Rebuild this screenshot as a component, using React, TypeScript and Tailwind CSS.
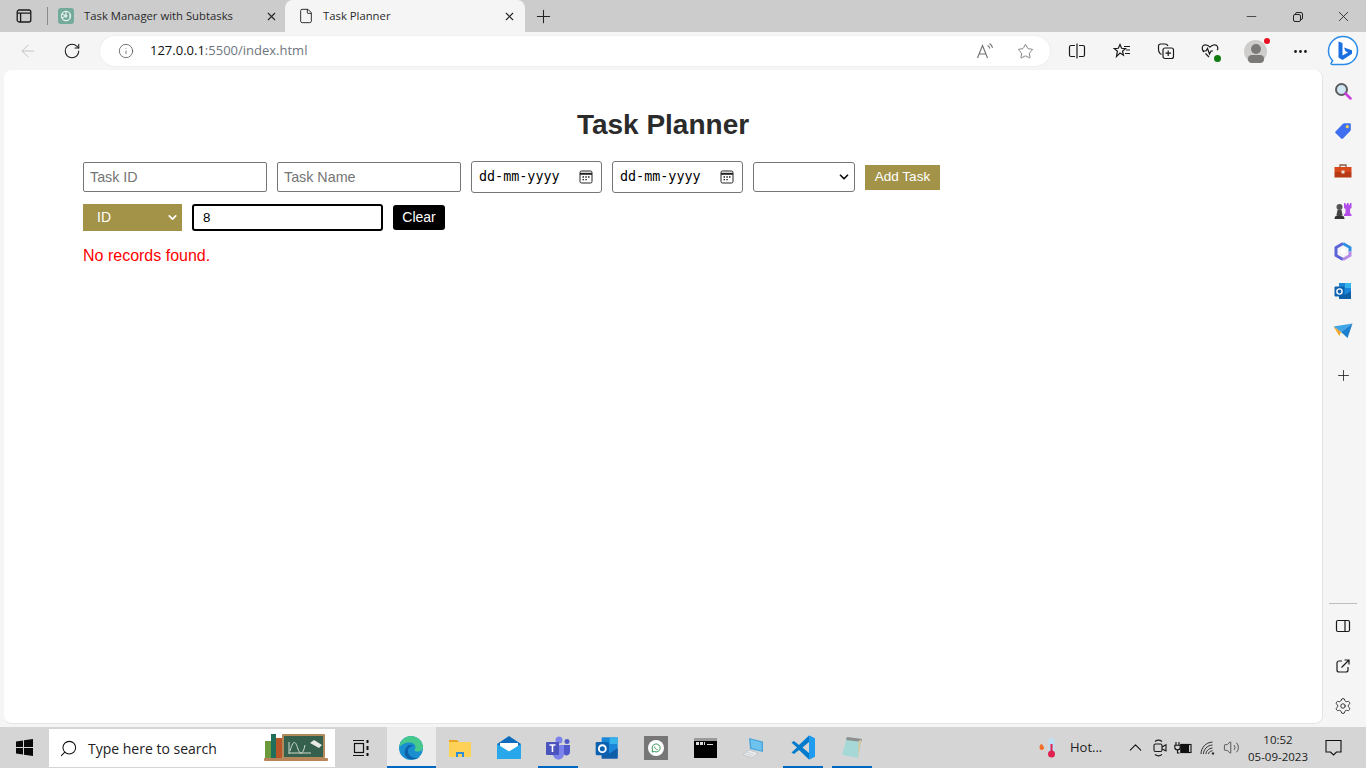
import React from "react";
import {
  ArrowLeft,
  ChevronDown,
  ChevronUp,
  File,
  Info,
  Minus,
  MoreHorizontal,
  Plus,
  RotateCw,
  Search,
  Settings,
  Star,
  Volume2,
  X,
} from "lucide-react";

const TabsIcon = () => (
  <svg width="16" height="16" viewBox="0 0 16 16" fill="none" stroke="#1a1a1a" strokeWidth="1.3">
    <rect x="1.2" y="2" width="13.6" height="12" rx="2" />
    <path d="M1.2 5.2h13.6M4.6 5.2V14" />
  </svg>
);

const GptIcon = () => (
  <div className="w-4 h-4 rounded-[3px] bg-[#74aa9c] flex items-center justify-center">
    <svg width="12" height="12" viewBox="0 0 12 12" fill="none" stroke="#e6f2ee" strokeWidth="1.1">
      <circle cx="6" cy="6" r="4.6" />
      <path d="M6 1.4v6M2 3.7l5.2 3M2 8.3l5.2-3M10 3.7v4.6" />
    </svg>
  </div>
);

const ReadAloud = () => (
  <svg width="18" height="18" viewBox="0 0 18 18" fill="none" stroke="#6f6f6f" strokeWidth="1.1">
    <path d="M1.5 16L6.5 3.5 11.5 16M3.2 12h6.6" />
    <path d="M11.5 3.5c1.3.6 2 1.6 2.2 3M13.5 1.5c1.7 1 2.7 2.4 3 4.4" />
  </svg>
);

const SplitIcon = () => (
  <svg width="18" height="18" viewBox="0 0 18 18" fill="none" stroke="#1a1a1a" strokeWidth="1.2">
    <path d="M7 3.5H3a1.5 1.5 0 0 0-1.5 1.5v8A1.5 1.5 0 0 0 3 14.500h4M11 3.500h4A1.500 1.500 0 0 1 16.500 5v8a1.500 1.500 0 0 1-1.500 1.500h-4M9 1.500v15" />
  </svg>
);

const FavsIcon = () => (
  <svg width="18" height="18" viewBox="0 0 18 18" fill="none" stroke="#1a1a1a" strokeWidth="1.2">
    <path d="M7 2.500l1.600 3.800 3.900.3-3 2.600 1 4-3.500-2.100-3.500 3.500.9-5.400-3-2.600 3.900-.3z" />
    <path d="M11 4.500h6M13 8h4M12 11.500h5" />
  </svg>
);

const CollectionsIcon = () => (
  <svg width="18" height="18" viewBox="0 0 18 18" fill="none" stroke="#1a1a1a" strokeWidth="1.2">
    <path d="M4.500 12.500C2.500 11.500 1.500 9.500 1.500 7V4a2 2 0 0 1 2-2H8c1.500 0 2.500.8 3 2" />
    <rect x="6" y="6" width="10.500" height="10.500" rx="2" />
    <path d="M11.200 8.500v5.500M8.500 11.200H14" />
  </svg>
);

const HeartIcon = () => (
  <div className="relative w-[18px] h-[18px]">
    <svg width="18" height="18" viewBox="0 0 18 18" fill="none" stroke="#1a1a1a" strokeWidth="1.2">
      <path d="M3 10C1.500 8.500 1 7.500 1.200 5.800 1.500 3.500 3.500 2.500 5.500 3c1.500.4 2.500 1.200 3.500 2.200C10 4.200 11 3.400 12.500 3c2-.5 4 .5 4.300 2.800.1 1-.1 1.700-.5 2.500" />
      <path d="M1.500 9h3.500L6.500 6.500 8.500 12l1.500-3H12M4.500 11.500L8 15" />
    </svg>
    <div className="absolute right-[-2px] bottom-[-2px] w-[7px] h-[7px] rounded-full bg-[#107c10]" />
  </div>
);

const Avatar = () => (
  <div className="relative w-[23px] h-[23px] rounded-full bg-[#cfcdcb]">
    <div className="absolute left-[7px] top-[4px] w-[10px] h-[10px] rounded-full bg-[#7b7977]" />
    <div className="absolute left-[4px] top-[15px] w-[16px] h-[8px] rounded-full bg-[#7b7977]" />
    <div className="absolute right-[-3px] top-[-2px] w-[6px] h-[6px] rounded-full bg-[#e81123]" />
  </div>
);

const BingIcon = () => (
  <svg width="32" height="32" viewBox="0 0 32 32">
    <path d="M16 1.500c8 0 14.500 6 14.500 14s-6 14-14 14H5.500c-1.500 0-1.800-1-1-2l1.200-1.800C3 23 1.500 19.500 1.500 16 1.500 8 8 1.500 16 1.500z" fill="#fff" stroke="#2b8be8" strokeWidth="1.500" />
    <path d="M11.500 6.500l4 1.500v12.500l5.500-3-2.500-1.200-1.500-3.800 8 2.800v3.500L15.500 25l-4-2.500z" fill="#1b6fe0" />
  </svg>
);

const SearchColor = () => (
  <svg width="18" height="18" viewBox="0 0 18 18" fill="none">
    <circle cx="7.500" cy="7.500" r="5.500" fill="#cfe6f5" stroke="#5c5c5c" strokeWidth="2" />
    <path d="M11.500 11.500l5 5" stroke="#c93fdc" strokeWidth="2.500" strokeLinecap="round" />
  </svg>
);

const TagIcon = () => (
  <svg width="18" height="18" viewBox="0 0 18 18">
    <path d="M1.500 9.500L9 1.800c.4-.3.700-.5 1.300-.5h5.500c.7 0 1 .4 1 1v5.500c0 .5-.2 1-.6 1.300L9 16.500c-.6.500-1.300.5-1.800 0l-5.700-5.400c-.5-.5-.5-1.100 0-1.600z" fill="#3f6fee" />
    <circle cx="13.300" cy="4.700" r="1.600" fill="#f7d154" />
  </svg>
);

const ToolboxIcon = () => (
  <svg width="18" height="18" viewBox="0 0 18 18">
    <path d="M6 5V3h6v2" fill="none" stroke="#8a5a44" strokeWidth="1.300" />
    <rect x="0.500" y="5" width="17" height="5" fill="#d9481c" />
    <rect x="0.500" y="10" width="17" height="5.500" fill="#b83a14" />
    <rect x="7.500" y="8.500" width="3" height="3" fill="#e8e0d8" />
  </svg>
);

const ChessIcon = () => (
  <svg width="20" height="20" viewBox="0 0 20 20">
    <path d="M11 2h1.500v1.500H14V2h1.500v1.500H17V2h1.500v5l-1.500 1v4l1.500 1.500V15H11v-1.500l1.500-1.500V8L11 7z" fill="#b14fe8" />
    <circle cx="6.500" cy="6" r="3" fill="#555" />
    <path d="M4.500 9h4l1 5h-6z" fill="#444" />
    <path d="M1.500 18c0-2.500 1.500-4 5-4s5 1.500 5 4z" fill="#333" />
  </svg>
);

const M365Icon = () => (
  <svg width="18" height="19" viewBox="0 0 18 19" fill="none">
    <path d="M9 1.500L2 5.500v8l7 4" stroke="#5a63d8" strokeWidth="3" />
    <path d="M9 1.500l7 4v4" stroke="#2f8fe0" strokeWidth="3" />
    <path d="M16 9.500v4l-7 4" stroke="#b78ae8" strokeWidth="3" />
    <circle cx="9" cy="9.500" r="2.500" fill="#fff" />
  </svg>
);

const OutlookIcon = ({ size = 18 }: { size?: number }) => (
  <svg width={size} height={size} viewBox="0 0 18 18">
    <rect x="5" y="1" width="12" height="15" fill="#1a86d8" />
    <rect x="11" y="1" width="6" height="5" fill="#36b3ea" />
    <path d="M5 9l6 4 6-4v8H5z" fill="#0f5ea8" />
    <rect x="0.500" y="4.500" width="10" height="10" rx="1" fill="#0c62b0" />
    <circle cx="5.500" cy="9.500" r="2.600" fill="none" stroke="#fff" strokeWidth="1.400" />
  </svg>
);

const SendIcon = () => (
  <svg width="20" height="16" viewBox="0 0 20 16">
    <path d="M0.500 3.500L19.500 0.500 8 9z" fill="#3fa4e8" />
    <path d="M0.500 3.500L8 9 6.500 13z" fill="#f0a426" />
    <path d="M8 9l11.500-8.500L14.500 15z" fill="#1d7fd0" />
  </svg>
);

const PanelIcon = () => (
  <svg width="16" height="16" viewBox="0 0 16 16" fill="none" stroke="#1a1a1a" strokeWidth="1.200">
    <rect x="1.500" y="2.500" width="13" height="11" rx="1.500" />
    <path d="M10 2.500v11" />
  </svg>
);

const ExternalIcon = () => (
  <svg width="16" height="16" viewBox="0 0 16 16" fill="none" stroke="#1a1a1a" strokeWidth="1.200">
    <path d="M7 3H4a2 2 0 0 0-2 2v7a2 2 0 0 0 2 2h7a2 2 0 0 0 2-2V9" />
    <path d="M6.500 9.500L14 2M9.500 2H14v4.500" />
  </svg>
);

const CalendarIcon = () => (
  <svg width="14" height="14" viewBox="0 0 14 14" fill="none" stroke="#222" strokeWidth="1">
    <rect x="1" y="1" width="12" height="12" rx="1.500" />
    <path d="M1 3.800h12" strokeWidth="2" />
    <path d="M3.500 7h1.500M6.300 7h1.500M9 7h1.500M3.500 9.700h1.500M6.300 9.700h1.500" strokeWidth="1.300" />
  </svg>
);

const WindowsIcon = () => (
  <svg width="17" height="17" viewBox="0 0 17 17" fill="#0a0a0a">
    <path d="M0 2.400L7 1.400v6.600H0zM8 1.300L17 0v8H8zM0 9h7v6.600L0 14.600zM8 9h9v8l-9-1.300z" />
  </svg>
);

const Chalkboard = () => (
  <svg width="64" height="30" viewBox="0 0 64 30">
    <rect x="7" y="1" width="5" height="24" fill="#1f6f5c" />
    <rect x="12" y="5" width="6" height="20" fill="#b8562a" />
    <rect x="1" y="8" width="6" height="17" fill="#6a9a3c" />
    <rect x="18" y="1" width="43" height="24" rx="1" fill="#b08a5a" />
    <rect x="20" y="3" width="39" height="21" fill="#35604d" />
    <path d="M25 21V9M25 20h22M26 18c4-14 6-8 8-2s5 6 7-4" fill="none" stroke="#cfdcd0" strokeWidth="1" />
    <path d="M46 10l4-3 8 5-3 3z" fill="#e8e8e4" />
    <rect x="0" y="25" width="64" height="3" rx="1" fill="#b8855a" />
  </svg>
);

const TaskViewIcon = () => (
  <svg width="18" height="18" viewBox="0 0 18 18" fill="none" stroke="#111" strokeWidth="1.200">
    <path d="M1 1.500h11M1 16.500h11" />
    <rect x="2.500" y="4.500" width="9" height="9" />
    <path d="M15.500 1v3M15.500 7v4M15.500 14v3" strokeWidth="2" />
  </svg>
);

const EdgeIcon = () => (
  <svg width="26" height="26" viewBox="0 0 26 26">
    <circle cx="13" cy="13" r="12" fill="#1a8fd0" />
    <path d="M1 13C2 5 8 1 13 1c6 0 12 5 12 11 0 3-2 4.500-5 4.500-2 0-3.500-.5-3.500-1.500 0-1 1-1.500 1-3 0-2.500-3-4.500-6-4.500C6 7.500 2.500 10 1 13z" fill="#45c98d" />
    <path d="M12 24c-5-1-6-6-5-9 1-3 3-5 5-5 2 0 3 1 4 1.500-4-1-6.500 2-6 5.500.4 3 3.500 6 8 6 1.500 0 3-.5 4-1-2.500 2-6 2.500-10 2z" fill="#0c5fa8" />
  </svg>
);

const FolderIcon = () => (
  <svg width="22" height="20" viewBox="0 0 22 20">
    <path d="M0 2h8l2 2H0z" fill="#e8a422" />
    <rect x="0" y="4" width="22" height="15" fill="#ffd257" />
    <path d="M7 19v-5h8v5h-2v-3H9v3z" fill="#2f8fd8" />
  </svg>
);

const MailIcon = () => (
  <svg width="24" height="23" viewBox="0 0 24 23">
    <path d="M0 8L12 0l12 8v15H0z" fill="#0f6cbd" />
    <path d="M3 7h18v4l-9 5-9-5z" fill="#fff" />
    <path d="M0 8l12 7.500L24 8v15H0z" fill="#28a8ea" />
  </svg>
);

const TeamsIcon = () => (
  <svg width="25" height="24" viewBox="0 0 25 24">
    <circle cx="13" cy="4" r="3.500" fill="#7b83eb" />
    <circle cx="21" cy="5.500" r="2.500" fill="#5059c9" />
    <path d="M17 9h7v7c0 2-2 3.500-3.500 3.500S17 18 17 16z" fill="#5059c9" />
    <path d="M7 9h11v9c0 3-2.500 5.500-5.500 5.500S7 21 7 18z" fill="#7b83eb" />
    <rect x="0" y="6" width="13" height="13" rx="1" fill="#4b53bc" />
    <path d="M3.500 9h6M6.500 9v7" stroke="#fff" strokeWidth="1.600" />
  </svg>
);

const WhatsappIcon = () => (
  <div className="w-6 h-6 bg-[#767676] flex items-center justify-center">
    <div className="w-4 h-4 rounded-full bg-white flex items-center justify-center">
      <svg width="10" height="10" viewBox="0 0 10 10" fill="none" stroke="#3a9a5c" strokeWidth="1">
        <path d="M1 9l.6-2.200A4 4 0 1 1 3.300 8.500z" />
        <path d="M3.500 3.500c0 1.500 1.500 3 3 3" />
      </svg>
    </div>
  </div>
);

const CmdIcon = () => (
  <div className="w-[23px] h-[20px] bg-black border-t-[3px] border-[#9a9a9a] px-[2px] pt-[1px] flex flex-col gap-[1px]">
    <div className="flex gap-[1px] items-end">
      <div className="w-[3px] h-[3px] bg-[#ddd]" />
      <div className="w-[3px] h-[3px] bg-[#ddd]" />
      <div className="w-[1px] h-[3px] bg-[#ddd]" />
      <div className="w-[6px] h-[1px] bg-[#ddd] ml-[1px]" />
    </div>
  </div>
);

const LaptopIcon = () => (
  <svg width="24" height="22" viewBox="0 0 24 22">
    <path d="M7 1l14 3.500V15L8 12z" fill="#4ba6dc" />
    <path d="M8.500 2.500l11 3v8L9.500 11z" fill="#6ec3ee" />
    <path d="M7 13l9 3-6 5-9-3.500z" fill="#eceef0" stroke="#b4b8bc" strokeWidth="0.600" />
    <path d="M5 15l7 2.500M3.500 16.500l7 2.800" stroke="#b4b8bc" strokeWidth="0.600" />
  </svg>
);

const VscodeIcon = () => (
  <svg width="25" height="25" viewBox="0 0 25 25">
    <path d="M18 0.500l6 3v18l-6 3L8 15l-5 4-2.500-1.500L6 12.500.5 7.500 3 6l5 4z" fill="#007acc" />
    <path d="M18 7l-6.500 5.500L18 18z" fill="#d4d4d4" />
    <path d="M18 0.500l6 3v18l-6 3z" fill="#1f9cf0" />
  </svg>
);

const NotepadIcon = () => (
  <svg width="22" height="23" viewBox="0 0 22 23">
    <path d="M6 1l15 2-4 19L1 19z" fill="#a6d8d8" />
    <path d="M6 1l15 2-.8 3L5 4z" fill="#8e8e8e" />
    <path d="M17.500 5l3-1.500L17 22z" fill="#d9c79e" />
  </svg>
);

const ThermoIcon = () => (
  <svg width="20" height="22" viewBox="0 0 20 22">
    <path d="M3 13C0.500 11.500 1.500 8.500 3.500 6.500 3.800 8 5.500 8.500 6 10.500 6.500 12 4.500 13.500 3 13z" fill="#f0702a" />
    <rect x="10.500" y="1" width="6" height="15" rx="3" fill="#bfe0f2" />
    <rect x="12.500" y="7" width="2" height="10" fill="#e0204e" />
    <circle cx="13.500" cy="17" r="3.500" fill="#e0204e" />
  </svg>
);

const MeetIcon = () => (
  <svg width="16" height="18" viewBox="0 0 16 18" fill="none" stroke="#1a1a1a" strokeWidth="1.100">
    <rect x="2" y="5" width="8" height="7.500" rx="1.500" />
    <path d="M10 8l4-2.200v6L10 10M3 2.500c2-1.500 5-1.500 7 0M3 15.500c2 1.500 5 1.500 7 0" />
  </svg>
);

const BatteryIcon = () => (
  <svg width="18" height="14" viewBox="0 0 18 14" fill="none" stroke="#111" strokeWidth="1.100">
    <path d="M2 1v3M5 1v3M0.800 4.200h5.400v2a2.500 2.500 0 0 1-5.400 0zM3.500 8.500V12h2" />
    <rect x="7" y="3.500" width="10" height="8" />
    <rect x="7" y="3.500" width="7.500" height="8" fill="#111" />
  </svg>
);

const WifiIcon = () => (
  <svg width="16" height="14" viewBox="0 0 16 14" fill="none" stroke="#333" strokeWidth="1">
    <path d="M1 13C1 7 5.500 1.500 12.500 1M3.500 13c0-4.500 3.500-8.500 9-9M6 13c0-3 2.500-5.500 6.500-6" />
    <path d="M8.500 13c0-1.500 1.500-3 4-3.300" />
    <circle cx="13" cy="12.500" r="1.200" fill="#333" stroke="none" />
  </svg>
);

const NotifyIcon = () => (
  <svg width="17" height="17" viewBox="0 0 17 17" fill="none" stroke="#111" strokeWidth="1.100">
    <path d="M1 1.500h15v11.500h-4.500L8.500 16l-3-3H1z" />
  </svg>
);

const toolbarIcons = [
  { x: "w-[44px]", icon: <SplitIcon /> },
  { x: "w-[45px]", icon: <FavsIcon /> },
  { x: "w-[44px]", icon: <CollectionsIcon /> },
  { x: "w-[44px]", icon: <HeartIcon /> },
  { x: "w-[46px]", icon: <Avatar /> },
  { x: "w-[45px]", icon: <MoreHorizontal size={17} color="#1a1a1a" /> },
  { x: "w-[40px]", icon: <BingIcon /> },
];

const sideIcons = [
  <SearchColor />,
  <TagIcon />,
  <ToolboxIcon />,
  <ChessIcon />,
  <M365Icon />,
  <OutlookIcon />,
  <SendIcon />,
];

const taskbarApps = [
  { icon: <EdgeIcon />, active: true },
  { icon: <FolderIcon /> },
  { icon: <MailIcon /> },
  { icon: <TeamsIcon />, open: true },
  { icon: <OutlookIcon size={24} /> },
  { icon: <WhatsappIcon /> },
  { icon: <CmdIcon /> },
  { icon: <LaptopIcon /> },
  { icon: <VscodeIcon />, open: true },
  { icon: <NotepadIcon />, open: true },
];

const inputClass =
  "w-[184px] h-[30px] px-[6px] bg-white border border-[#767676] rounded-[2px] text-[14.3px] placeholder:text-[#757575] outline-none";

const DateBox = () => (
  <div className="w-[131px] h-[32px] pl-[7px] pr-[8px] bg-white border border-[#767676] rounded-[3px] flex items-center justify-between">
    <span className="text-[13.4px] text-black font-['DejaVu_Sans_Mono',monospace]">dd-mm-yyyy</span>
    <CalendarIcon />
  </div>
);

export default function App() {
  return (
    <div className="w-[1366px] h-[768px] overflow-hidden flex flex-col bg-[#f5f5f5] font-['Open_Sans','Noto_Sans',sans-serif] text-black">
      {/* tabs */}
      <div className="h-[32px] bg-[#cccccc] flex items-end shrink-0">
        <div className="w-[48px] h-[32px] flex items-center justify-center relative">
          <TabsIcon />
          <div className="absolute right-0 top-[7px] w-px h-[18px] bg-[#8a8a8a]" />
        </div>
        <div className="w-[237px] h-[32px] pl-[10px] pr-[7px] flex items-center">
          <GptIcon />
          <span className="ml-[10px] text-[11.3px] text-[#2a2a2a] flex-1">Task Manager with Subtasks</span>
          <X size={13} color="#222" />
        </div>
        <div className="w-[240px] h-[32px] bg-[#f5f5f5] rounded-t-[8px] pl-[13px] pr-[9px] flex items-center">
          <File size={16} color="#222" strokeWidth={1.4} />
          <span className="ml-[9px] text-[11.3px] text-[#2a2a2a] flex-1">Task Planner</span>
          <X size={13} color="#222" />
        </div>
        <div className="w-[38px] h-[32px] flex items-center justify-center pr-[1px]">
          <Plus size={21} color="#222" strokeWidth={1.2} />
        </div>
        <div className="flex-1" />
        <div className="w-[46px] h-[32px] flex items-center justify-center">
          <Minus size={15} color="#222" strokeWidth={1.2} />
        </div>
        <div className="w-[46px] h-[32px] flex items-center justify-center relative">
          <div className="w-[8px] h-[8px] border border-[#222] rounded-[2px] absolute left-[21px] top-[12px]" />
          <div className="w-[8px] h-[8px] border border-[#222] rounded-[2px] bg-[#cccccc] absolute left-[19px] top-[14px]" />
        </div>
        <div className="w-[46px] h-[32px] flex items-center justify-center">
          <X size={17} color="#222" strokeWidth={1.2} />
        </div>
      </div>

      {/* address bar */}
      <div className="h-[38px] flex items-center shrink-0">
        <div className="w-[50px] flex justify-center pl-[6px]">
          <ArrowLeft size={20} color="#c4c4c4" strokeWidth={1.2} />
        </div>
        <div className="w-[50px] flex justify-center pr-[6px]">
          <RotateCw size={18} color="#1a1a1a" strokeWidth={1.4} />
        </div>
        <div className="w-[950px] h-[30px] bg-white rounded-full flex items-center pl-[18px] pr-[16px] shadow-[0_0_2px_rgba(0,0,0,0.08)]">
          <Info size={16} color="#555" strokeWidth={1.2} />
          <span className="ml-[16px] text-[13px] text-[#111] flex-1">
            127.0.0.1<span className="text-[#6f7680]">:5500/index.html</span>
          </span>
          <ReadAloud />
          <div className="w-[40px] flex justify-end">
            <Star size={17} color="#6f6f6f" strokeWidth={1.2} />
          </div>
        </div>
        <div className="w-[5px]" />
        {toolbarIcons.map((item, i) => (
          <div key={i} className={`${item.x} flex justify-center items-center`}>
            {item.icon}
          </div>
        ))}
      </div>

      {/* page + sidebar */}
      <div className="flex-1 flex min-h-0">
        <div className="ml-[4px] w-[1319px] bg-white rounded-[8px] border-b border-r border-[#e4e4e4] pl-[79px] pt-[37px] font-['Liberation_Sans',Arial,sans-serif]">
          <h1 className="text-[28px] leading-[36px] font-bold text-[#2b2b2b] text-center pr-[79px]">Task Planner</h1>
          <div className="mt-[18px] flex items-center gap-[10px] h-[32px]">
            <input className={inputClass} placeholder="Task ID" readOnly />
            <input className={inputClass} placeholder="Task Name" readOnly />
            <DateBox />
            <DateBox />
            <div className="w-[102px] h-[30px] bg-white border border-[#767676] rounded-[3px] flex items-center justify-end pr-[3px]">
              <ChevronDown size={14} color="#111" strokeWidth={3} />
            </div>
            <button className="w-[75px] h-[25px] pt-[1px] bg-[#a39349] text-white text-[13.5px]">Add Task</button>
          </div>
          <div className="mt-[11px] flex items-center gap-[10px] h-[27px]">
            <div className="w-[99px] h-[27px] bg-[#a39349] text-white text-[14px] pl-[14px] pr-[3px] flex items-center justify-between">
              <span>ID</span>
              <ChevronDown size={13} color="#fff" strokeWidth={3.2} />
            </div>
            <input
              className="w-[191px] h-[27px] px-[9px] bg-white border-2 border-black rounded-[3px] text-[13.33px] text-black outline-none"
              value="8"
              readOnly
            />
            <button className="w-[52px] h-[25px] bg-black text-white text-[14px] font-medium rounded-[3px]">Clear</button>
          </div>
          <p className="mt-[15px] text-[16px] leading-[20px] text-[#ff0000]">No records found.</p>
        </div>
        <div className="flex-1 flex flex-col items-center pt-[1px] pr-[3px]">
          {sideIcons.map((icon, i) => (
            <div key={i} className="h-[40px] w-full flex items-center justify-center">
              {icon}
            </div>
          ))}
          <div className="h-[48px] w-full flex items-center justify-center">
            <Plus size={17} color="#222" strokeWidth={1.2} />
          </div>
          <div className="flex-1" />
          <div className="w-[28px] h-px bg-[#bdbdbd] mb-[2px]" />
          <div className="h-[40px] w-full flex items-center justify-center">
            <PanelIcon />
          </div>
          <div className="h-[40px] w-full flex items-center justify-center">
            <ExternalIcon />
          </div>
          <div className="h-[40px] w-full flex items-center justify-center mb-[-2px]">
            <Settings size={18} color="#222" strokeWidth={1.2} />
          </div>
        </div>
      </div>

      {/* taskbar */}
      <div className="mt-[3px] h-[41px] bg-[#d5d5d5] flex items-stretch shrink-0">
        <div className="w-[49px] flex items-center justify-center">
          <WindowsIcon />
        </div>
        <div className="w-[286px] mt-[2px] mb-[1px] bg-white flex items-center pl-[10px] pr-[7px]">
          <Search size={19} color="#111" strokeWidth={1.3} className="-scale-x-100" />
          <span className="ml-[10px] text-[14px] text-[#222] flex-1">Type here to search</span>
          <Chalkboard />
        </div>
        <div className="w-[51.5px] flex items-center justify-center">
          <TaskViewIcon />
        </div>
        {taskbarApps.map((app, i) => (
          <div
            key={i}
            className={`w-[49px] relative flex items-center justify-center ${app.active ? "bg-[#ececec]" : ""}`}
          >
            {app.icon}
            {(app.active || app.open) && (
              <div className={`absolute bottom-0 h-[2px] bg-[#0067c0] ${app.active ? "left-0 right-0" : "left-[4px] right-[5px]"}`} />
            )}
          </div>
        ))}
        <div className="w-[245.5px] flex items-center justify-end">
          <ThermoIcon />
          <span className="ml-[12px] w-[52px] text-[13px] text-[#222]">Hot...</span>
        </div>
        <div className="w-[26px] flex items-center justify-center">
          <ChevronUp size={21} color="#111" strokeWidth={1.2} />
        </div>
        <div className="w-[24px] flex items-center justify-center">
          <MeetIcon />
        </div>
        <div className="w-[22px] flex items-center justify-center">
          <BatteryIcon />
        </div>
        <div className="w-[28px] flex items-center justify-center">
          <WifiIcon />
        </div>
        <div className="w-[18px] flex items-center justify-center">
          <Volume2 size={17} color="#333" strokeWidth={1.1} />
        </div>
        <div className="w-[3px]" />
        <div className="w-[70px] flex flex-col items-center justify-center text-[11.5px] leading-[17px] text-[#222]">
          <span>10:52</span>
          <span>05-09-2023</span>
        </div>
        <div className="w-[7px]" />
        <div className="w-[26px] flex items-center justify-center">
          <NotifyIcon />
        </div>
      </div>
    </div>
  );
}
